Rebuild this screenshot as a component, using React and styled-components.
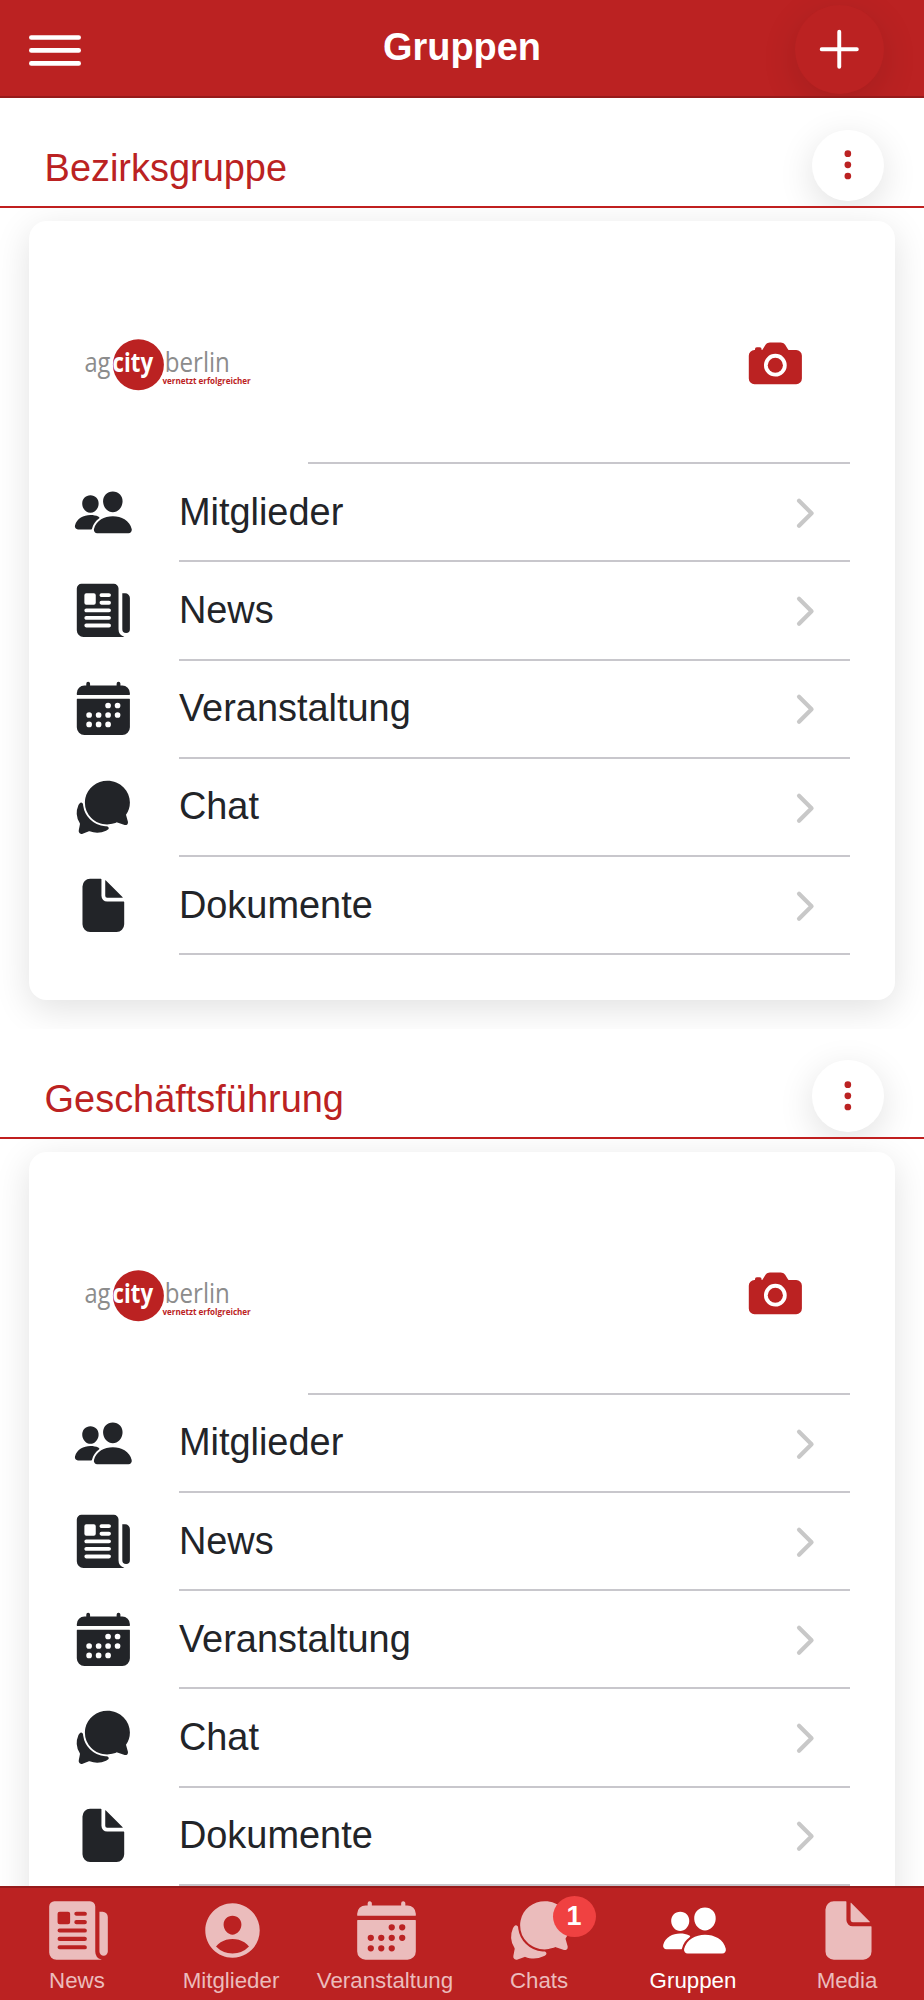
import styled, { createGlobalStyle } from "styled-components";
import {
  IoAdd,
  IoCalendar,
  IoCamera,
  IoChatbubbles,
  IoChevronForward,
  IoDocument,
  IoEllipsisVertical,
  IoNewspaper,
  IoPeople,
  IoPersonCircle,
} from "react-icons/io5";

const RED = "#bb2222";

const GlobalStyle = createGlobalStyle`
  * {
    box-sizing: border-box;
  }
  body {
    margin: 0;
    background-color: #fff;
    font-family: "Liberation Sans", Arial, sans-serif;
    color: #222428;
  }
  button {
    padding: 0;
    border: none;
    font-family: inherit;
    color: inherit;
  }
  svg {
    display: block;
    flex: none;
  }
`;

const Page = styled.div`
  height: 100vh;
  display: flex;
  flex-direction: column;
  overflow: hidden;
`;

const Header = styled.header`
  height: 98px;
  flex: none;
  display: grid;
  grid-template-columns: 1fr auto 1fr;
  align-items: center;
  padding: 2px 40px 0 29px;
  overflow: hidden;
  color: #fff;
  background-color: ${RED};
  border-bottom: 2px solid #961b1b;
`;

const MenuButton = styled.button`
  width: 52px;
  margin-top: 3px;
  background: none;
`;

const PageTitle = styled.h1`
  margin: 0 0 5px 11px;
  font-size: 37.94px;
  line-height: 44px;
  font-weight: 700;
`;

const RoundButton = styled.button`
  width: ${({ $size }) => $size}px;
  height: ${({ $size }) => $size}px;
  display: flex;
  align-items: center;
  justify-content: center;
  justify-self: end;
  flex: none;
  border-radius: 50%;
  color: ${({ $filled }) => ($filled ? "#fff" : RED)};
  background-color: ${({ $filled }) => ($filled ? RED : "#fff")};
  box-shadow: 0 9px 36px rgba(0, 0, 0, 0.12);
`;

const Content = styled.main`
  flex: 1;
  min-height: 0;
  overflow: hidden;
`;

const GroupHeader = styled.div`
  position: relative;
  z-index: 1;
  height: 110px;
  display: flex;
  align-items: center;
  justify-content: space-between;
  padding: 26.4px 40.5px 0 44.6px;
  overflow: hidden;
  background-color: #fff;
  border-bottom: 2.3px solid #c01f1f;
`;

const GroupTitle = styled.h2`
  margin: 6px 0 0;
  font-size: 37.94px;
  line-height: 44px;
  font-weight: 400;
  color: ${RED};
`;

const Card = styled.section`
  height: 779px;
  margin: 13px 29px 28.7px;
  padding-top: 44.6px;
  border-radius: 17.8px;
  background-color: #fff;
  box-shadow: 0 9px 36px rgba(0, 0, 0, 0.12);
`;

const Row = styled.div`
  height: ${({ $tall }) => ($tall ? 198.6 : 98.2)}px;
  display: flex;
  align-items: center;
  padding: 0 45px 0 44.3px;
`;

const RowIcon = styled.div`
  margin: 0 44.9px 2px 0;
  font-size: 60.7px;
`;

const RowBody = styled.div`
  flex: 1;
  height: 100%;
  display: flex;
  align-items: center;
  justify-content: ${({ $end }) => ($end ? "flex-end" : "space-between")};
  padding: ${({ $end }) => ($end ? "0 44.2px 2px 0" : "2px 22.3px 0 0")};
  border-bottom: 2px solid #c8c7cc;
`;

const RowLabel = styled.span`
  margin-bottom: 3px;
  font-size: 37.94px;
  line-height: 44px;
`;

const LogoBox = styled.div`
  width: 190px;
  margin-right: 44.7px;
`;

const TabBar = styled.nav`
  height: 114px;
  position: relative;
  z-index: 2;
  flex: none;
  display: grid;
  grid-template-columns: repeat(6, 1fr);
  background-color: ${RED};
  border-top: 2px solid #961b1b;
`;

const Tab = styled.div`
  display: flex;
  flex-direction: column;
  align-items: center;
  padding-top: 9px;
  font-size: 22.3px;
  line-height: 26px;
  color: ${({ $active }) => ($active ? "#fff" : "#ebbcbc")};
`;

const TabIcon = styled.div`
  position: relative;
  margin: 0 0 4px 2px;
  font-size: 67px;
`;

const Badge = styled.span`
  position: absolute;
  top: -1px;
  left: 46px;
  width: 43px;
  height: 41px;
  border-radius: 50%;
  background-color: #f04141;
  color: #fff;
  font-size: 27px;
  line-height: 41px;
  font-weight: 700;
  text-align: center;
`;

const MENU = [
  { label: "Mitglieder", Icon: IoPeople },
  { label: "News", Icon: IoNewspaper },
  { label: "Veranstaltung", Icon: IoCalendar },
  { label: "Chat", Icon: IoChatbubbles },
  { label: "Dokumente", Icon: IoDocument },
];

const TABS = [
  { label: "News", Icon: IoNewspaper },
  { label: "Mitglieder", Icon: IoPersonCircle },
  { label: "Veranstaltung", Icon: IoCalendar },
  { label: "Chats", Icon: IoChatbubbles, badge: 1 },
  { label: "Gruppen", Icon: IoPeople, active: true },
  { label: "Media", Icon: IoDocument },
];

const MenuIcon = () => (
  <svg width="52" height="31" viewBox="0 0 52 31" fill="currentColor">
    <rect y="0.2" width="52" height="4.6" rx="2.3" />
    <rect y="13.1" width="52" height="4.6" rx="2.3" />
    <rect y="26.1" width="52" height="4.6" rx="2.3" />
  </svg>
);

const Logo = () => (
  <svg
    width="190"
    height="60"
    viewBox="0 0 190 60"
    fontFamily='"Open Sans", "Noto Sans", sans-serif'
  >
    <circle cx="65.4" cy="29.8" r="25.5" fill={RED} />
    <g fill="#8c8c8c" fontSize="27">
      <text x="11.4" y="37.4" textLength="26" lengthAdjust="spacingAndGlyphs">
        ag
      </text>
      <text x="91.8" y="37.4" textLength="65" lengthAdjust="spacingAndGlyphs">
        berlin
      </text>
    </g>
    <text
      x="39.6"
      y="37.4"
      fill="#fff"
      fontSize="27"
      fontWeight="700"
      textLength="40.6"
      lengthAdjust="spacingAndGlyphs"
    >
      city
    </text>
    <text
      x="89.4"
      y="48.8"
      fill={RED}
      fontSize="8"
      fontWeight="700"
      textLength="88.4"
      lengthAdjust="spacingAndGlyphs"
    >
      vernetzt erfolgreicher
    </text>
  </svg>
);

const Group = ({ title }) => (
  <>
    <GroupHeader>
      <GroupTitle>{title}</GroupTitle>
      <RoundButton $size={71.4}>
        <IoEllipsisVertical size={35.7} />
      </RoundButton>
    </GroupHeader>
    <Card>
      <Row $tall>
        <LogoBox>
          <Logo />
        </LogoBox>
        <RowBody $end>
          <IoCamera size={60.7} color={RED} />
        </RowBody>
      </Row>
      {MENU.map(({ label, Icon }) => (
        <Row key={label}>
          <RowIcon>
            <Icon />
          </RowIcon>
          <RowBody>
            <RowLabel>{label}</RowLabel>
            <IoChevronForward size={44.6} color="#c8c8c8" />
          </RowBody>
        </Row>
      ))}
    </Card>
  </>
);

export default function App() {
  return (
    <Page>
      <GlobalStyle />
      <Header>
        <MenuButton>
          <MenuIcon />
        </MenuButton>
        <PageTitle>Gruppen</PageTitle>
        <RoundButton $size={89} $filled>
          <IoAdd size={62.5} />
        </RoundButton>
      </Header>
      <Content>
        <Group title="Bezirksgruppe" />
        <Group title="Geschäftsführung" />
      </Content>
      <TabBar>
        {TABS.map(({ label, Icon, badge, active }) => (
          <Tab key={label} $active={active}>
            <TabIcon>
              <Icon />
              {badge && <Badge>{badge}</Badge>}
            </TabIcon>
            {label}
          </Tab>
        ))}
      </TabBar>
    </Page>
  );
}
